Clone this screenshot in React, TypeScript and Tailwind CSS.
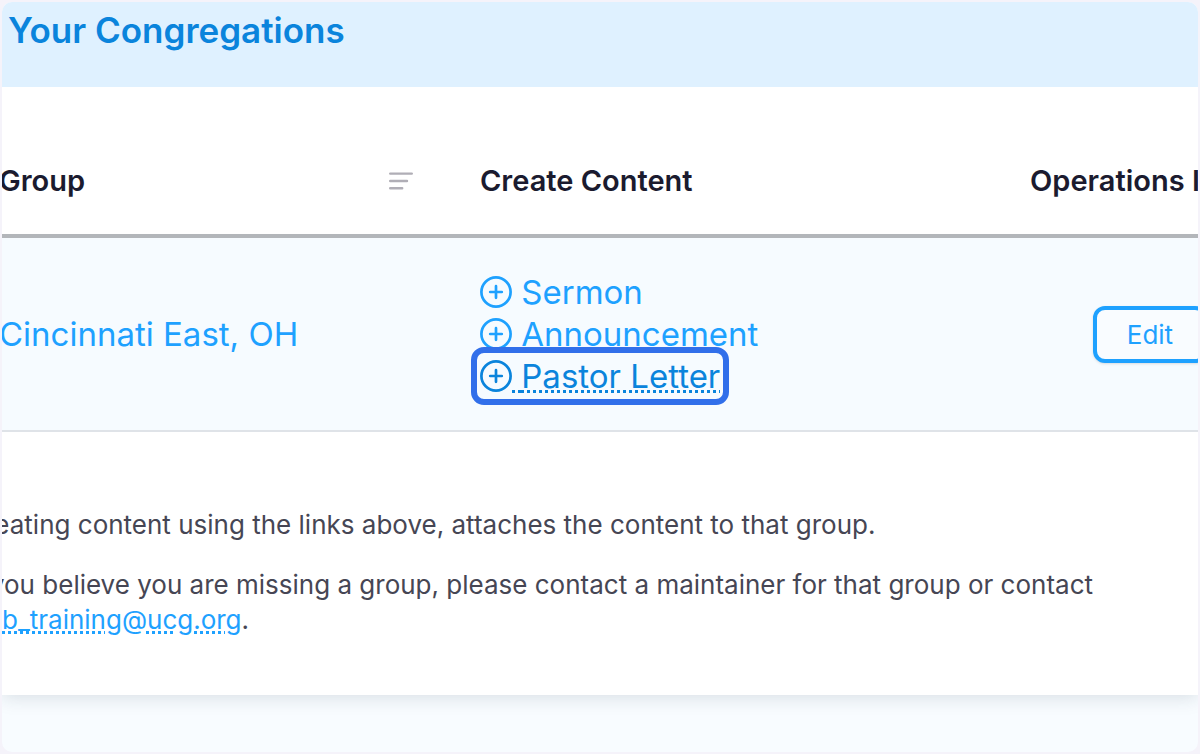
interface Congregation {
  name: string
  content: { label: string; selected?: boolean }[]
}

const congregations: Congregation[] = [
  {
    name: 'Cincinnati East, OH',
    content: [
      { label: 'Sermon' },
      { label: 'Announcement' },
      { label: 'Pastor Letter', selected: true },
    ],
  },
]

function PlusCircle() {
  return (
    <svg
      className="inline-block h-8 w-8 align-[-4px]"
      viewBox="0 0 32 32"
      fill="none"
      stroke="currentColor"
      strokeWidth="2.7"
      strokeLinecap="round"
      aria-hidden="true"
    >
      <circle cx="16" cy="16" r="14.6" />
      <path d="M16 10.2v11.6M10.2 16h11.6" />
    </svg>
  )
}

function SortIcon() {
  return (
    <svg
      className="h-5 w-6"
      viewBox="0 0 24 20"
      fill="none"
      stroke="#b0aeb6"
      strokeWidth="2.4"
      strokeLinecap="round"
      aria-hidden="true"
    >
      <path d="M1.2 2.6h21.6M1.2 10h16.8M1.2 17.2h12" />
    </svg>
  )
}

function CongregationRow({ group }: { group: Congregation }) {
  return (
    <tr className="border-b-2 border-[#dfe3e8] bg-[#f6fbff] text-[33px] leading-[42px] text-[#1ea1ff]">
      <td>
        <a href="#group">{group.name}</a>
      </td>
      <td className="py-[33px]">
        <ul>
          {group.content.map(item => (
            <li key={item.label}>
              <a
                href="#create"
                className={
                  item.selected
                    ? 'rounded-sm text-[#0a84dc] underline decoration-dotted decoration-[3px] underline-offset-2 outline-6 outline-offset-3 outline-[#316fea]'
                    : ''
                }
              >
                <PlusCircle /> {item.label}
              </a>
            </li>
          ))}
        </ul>
      </td>
      <td className="text-center">
        <button
          type="button"
          className="rounded-xl border-4 border-[#1ea1ff] bg-[#f9fcff] px-[30px] py-2 align-middle text-[26px] leading-[33px] shadow-sm"
        >
          Edit
        </button>
      </td>
    </tr>
  )
}

export default function App() {
  return (
    <div className="min-h-screen bg-[#f5f3fa] font-['Inter',sans-serif]">
      <div className="flex min-h-screen flex-col overflow-hidden rounded-xl border-2 border-[#f5f3fa] bg-[#f8fcff]">
        <main className="bg-white shadow-[0_2px_18px_rgba(30,50,70,0.15)]">
          <header className="bg-[#dff1ff] px-1.5 pt-[5px] pb-[34px]">
            <h1 className="text-[35px] leading-[46px] font-semibold text-[#0a84dc]">Your Congregations</h1>
          </header>

          <table className="-ml-[3px] mt-10 w-full whitespace-nowrap">
            <thead>
              <tr className="border-b-4 border-[#b3b6ba] text-left text-[29px] leading-10 text-[#1b1b2f]">
                <th className="min-w-[481px] pt-[34px] pb-[33px] font-semibold">
                  <div className="flex items-center justify-between pr-[67px]">
                    Group
                    <button type="button" aria-label="Sort by group">
                      <SortIcon />
                    </button>
                  </div>
                </th>
                <th className="min-w-[550px] font-semibold">Create Content</th>
                <th className="pr-6 font-semibold">Operations Info</th>
              </tr>
            </thead>
            <tbody>
              {congregations.map(group => (
                <CongregationRow key={group.name} group={group} />
              ))}
            </tbody>
          </table>

          {/* Notes under the table */}
          <div className="-ml-9 space-y-[25px] pt-[75px] pb-[58px] text-[26px] leading-[35px] text-[#464654]">
            <p>Creating content using the links above, attaches the content to that group.</p>
            <p>
              If you believe you are missing a group, please contact a maintainer for that group or contact
              <br />
              <a
                href="#contact"
                className="text-[#1ea1ff] underline decoration-dotted decoration-[3px] underline-offset-2"
              >
                web_training@ucg.org
              </a>
              .
            </p>
          </div>
        </main>
      </div>
    </div>
  )
}
